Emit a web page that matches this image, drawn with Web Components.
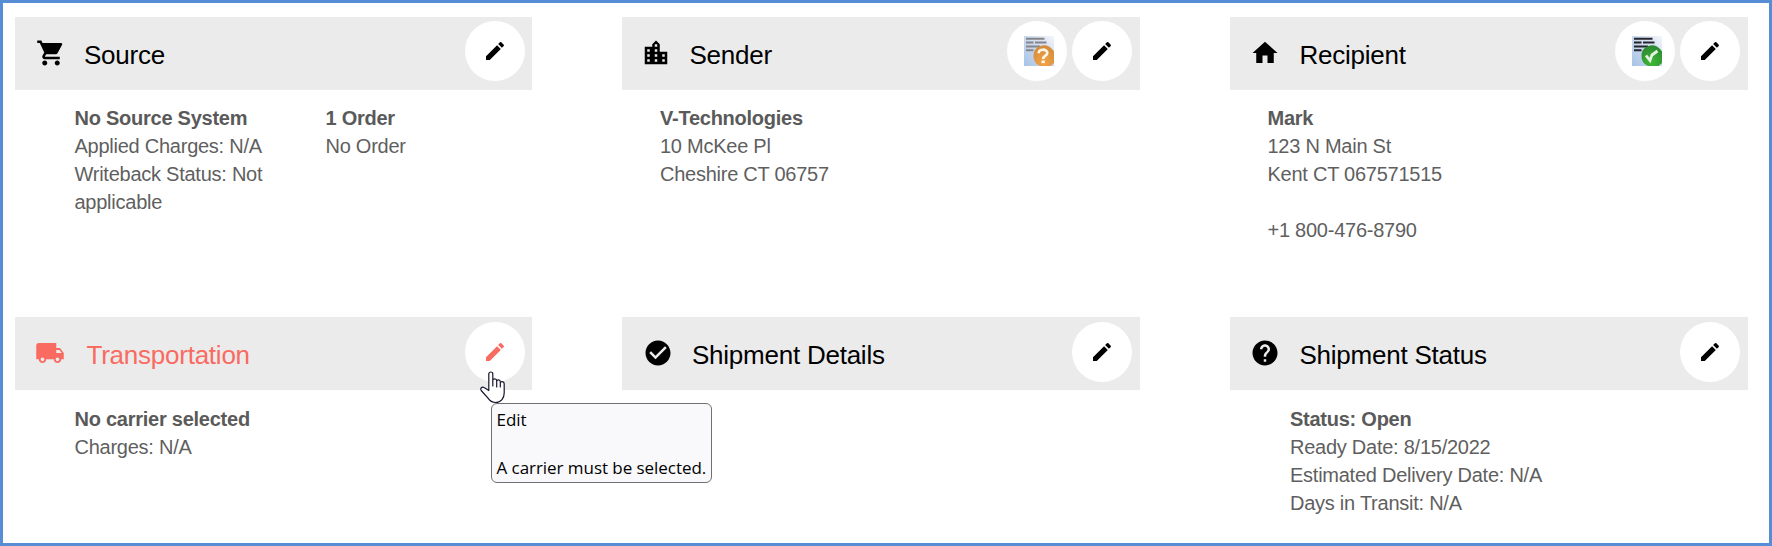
<!DOCTYPE html>
<html lang="en">
<head>
<meta charset="utf-8">
<title>Shipment</title>
<style>
html,body{margin:0;height:100%}
body{font-family:"Liberation Sans",Arial,sans-serif;background:#fff;overflow:hidden}
</style>
</head>
<body>
<shipment-board>
  <info-card icon="cart" heading="Source" style="--title-gap:18px;--body-pad:59.5px">
    <round-button slot="actions" icon="edit"></round-button>
    <text-lines style="width:251px"><b>No Source System</b><span>Applied Charges: N/A</span><span>Writeback Status: Not</span><span>applicable</span></text-lines>
    <text-lines><b>1 Order</b><span>No Order</span></text-lines>
  </info-card>
  <info-card icon="city" heading="Sender" style="--body-pad:38px;--icon-pad:19px;--title-gap:18.5px;--end:8px">
    <round-button slot="actions" icon="unverified"></round-button>
    <round-button slot="actions" icon="edit"></round-button>
    <text-lines><b>V-Technologies</b><span>10 McKee Pl</span><span>Cheshire CT 06757</span></text-lines>
  </info-card>
  <info-card icon="home" heading="Recipient" style="--body-pad:37.5px;--icon-pad:20px;--title-gap:19.5px;--end:8px">
    <round-button slot="actions" icon="verified"></round-button>
    <round-button slot="actions" icon="edit"></round-button>
    <text-lines><b>Mark</b><span>123 N Main St</span><span>Kent CT 067571515</span><span>&nbsp;</span><span>+1 800-476-8790</span></text-lines>
  </info-card>
  <info-card icon="truck" heading="Transportation" class="second" style="--accent:#f96a60;--icon-pad:20px;--title-gap:21.5px;--body-pad:59.5px">
    <round-button slot="actions" icon="edit"></round-button>
    <text-lines><b>No carrier selected</b><span>Charges: N/A</span></text-lines>
  </info-card>
  <info-card icon="check" heading="Shipment Details" class="second" style="--title-gap:19.5px;--icon-pad:20.5px;--end:8px">
    <round-button slot="actions" icon="edit"></round-button>
  </info-card>
  <info-card icon="help" heading="Shipment Status" class="second" style="--title-gap:19.5px;--icon-pad:20px;--end:8px">
    <round-button slot="actions" icon="edit"></round-button>
    <text-lines><b>Status: Open</b><span>Ready Date: 8/15/2022</span><span>Estimated Delivery Date: N/A</span><span>Days in Transit: N/A</span></text-lines>
  </info-card>
  <hover-tip slot="overlay"><span>Edit</span><span>&nbsp;</span><span>A carrier must be selected.</span></hover-tip>
  <hand-cursor slot="overlay"></hand-cursor>
</shipment-board>
<script>
const PATHS = {
  cart:'<path d="M7 18c-1.1 0-1.99.9-1.99 2S5.900 22 7 22s2-.9 2-2-.9-2-2-2zM1 2v2h2l3.600 7.590-1.350 2.450c-.16.28-.25.61-.25.96 0 1.100.9 2 2 2h12v-2H7.420c-.14 0-.25-.11-.25-.25l.03-.12.9-1.630h7.450c.75 0 1.410-.41 1.750-1.030l3.580-6.490A1 1 0 0 0 20 4H5.210l-.94-2H1zm16 16c-1.100 0-1.990.9-1.990 2s.89 2 1.990 2 2-.9 2-2-.9-2-2-2z"/>',
  city:'<path d="M15 11V5l-3-3-3 3v2H3v14h18V11h-6zm-8 8H5v-2h2v2zm0-4H5v-2h2v2zm0-4H5V9h2v2zm6 8h-2v-2h2v2zm0-4h-2v-2h2v2zm0-4h-2V9h2v2zm0-4h-2V5h2v2zm6 12h-2v-2h2v2zm0-4h-2v-2h2v2z"/>',
  home:'<path d="M10 20v-6h4v6h5v-8h3L12 3 2 12h3v8z"/>',
  truck:'<path d="M20 8h-3V4H3c-1.100 0-2 .9-2 2v11h2c0 1.660 1.340 3 3 3s3-1.340 3-3h6c0 1.660 1.340 3 3 3s3-1.340 3-3h2v-5l-3-4zM6 18.500c-.83 0-1.500-.67-1.500-1.500s.67-1.500 1.500-1.500 1.500.67 1.500 1.500-.67 1.500-1.500 1.500zm13.500-9l1.960 2.500H17V9.500h2.500zm-1.500 9c-.83 0-1.500-.67-1.500-1.500s.67-1.500 1.500-1.500 1.500.67 1.500 1.500-.67 1.500-1.500 1.500z"/>',
  check:'<path d="M12 2C6.480 2 2 6.480 2 12s4.480 10 10 10 10-4.480 10-10S17.520 2 12 2zm-2 15l-5-5 1.410-1.410L10 14.170l7.590-7.590L19 8l-9 9z"/>',
  help:'<path d="M12 2C6.480 2 2 6.480 2 12s4.480 10 10 10 10-4.480 10-10S17.520 2 12 2zm1 17h-2v-2h2v2zm2.070-7.750l-.9.92C13.450 12.900 13 13.500 13 15h-2v-.5c0-1.100.45-2.100 1.170-2.830l1.240-1.260c.37-.36.59-.86.59-1.410 0-1.100-.9-2-2-2s-2 .9-2 2H8c0-2.210 1.790-4 4-4s4 1.790 4 4c0 .88-.36 1.680-.93 2.250z"/>',
  edit:'<path d="M3 17.250V21h3.750L17.810 9.940l-3.750-3.750L3 17.250zM20.710 7.040a1 1 0 0 0 0-1.410l-2.340-2.340a1 1 0 0 0-1.410 0l-1.830 1.830 3.750 3.750 1.830-1.830z"/>'
};
const record = (ink, light, dark, mark) => `<svg width="30" height="30" viewBox="0 0 30 30" style="margin-left:4px">
  <defs><linearGradient id="p" x1="1" y1="0" x2="0" y2="1"><stop offset="0" stop-color="#f2f5fb"/><stop offset=".5" stop-color="#ccd8ed"/><stop offset="1" stop-color="#a6c3e6"/></linearGradient>
  <radialGradient id="b" cx=".5" cy=".85" r=".8"><stop offset="0" stop-color="${light}"/><stop offset="1" stop-color="${dark}"/></radialGradient></defs>
  <path fill="url(#p)" d="M0 0h30v30H0z"/>
  <path stroke="${ink}" stroke-width="2" d="M2 2.700h18.500M2 6.500h7.500M11 6.500h11.500M2 10.400h14M2 14.200h7.500"/>
  <path fill="url(#b)" d="M9.500 20a10.500 10.500 0 0 1 18.500-7l2 2.500V27l-3.500 3H16a10.500 10.500 0 0 1-6.500-10z"/>${mark}</svg>`;
const PICTURES = {
  unverified: record('#85868a','#f0a548','#d58a3a','<path fill="none" stroke="#fff6e6" stroke-width="2.700" d="M14.700 17.300c0-4.800 8.600-4.600 8.600-.4 0 3-4.200 3-4.200 6"/><path fill="#fff6e6" d="M17.500 24.500h3.300v2.600h-3.300z"/>'),
  verified: record('#24262e','#3fb836','#2c8a30','<path fill="none" stroke="#e4f3df" stroke-width="2.800" d="M14 19.500l4 5 2-5.500 5.500-4"/>')
};
const svg = (name, size) => PICTURES[name] || `<svg width="${size}" height="${size}" viewBox="0 0 24 24" fill="currentColor">${PATHS[name]}</svg>`;

function define(tag, render){
  customElements.define(tag, class extends HTMLElement{
    constructor(){ super(); this.attachShadow({mode:'open'}); }
    connectedCallback(){ this.shadowRoot.innerHTML = render(this); }
  });
}
define('shipment-board', () => `<style>
  :host{box-sizing:border-box;display:grid;position:relative;height:546px;border:3px solid #568dd4;padding:14px 21px 0 12px;
    grid-template-columns:517px 518px 518px;grid-template-rows:300px 1fr;column-gap:90px;background:#fff}
  </style><slot></slot><slot name="overlay"></slot>`);
define('info-card', el => `<style>
  :host{display:block;color:var(--accent,#000)}
  :host(.second){--top:5px;--body-top:15px}
  header{box-sizing:border-box;height:73px;background:#ebebeb;display:flex;align-items:flex-start;padding-right:var(--end,7px)}
  .icon{display:flex;padding:20.500px 0 0 var(--icon-pad,21px)}
  h2{flex:1;margin:0 0 0 var(--title-gap);padding-top:21px;font-size:26px;font-weight:400;line-height:34px;letter-spacing:-.24px;white-space:nowrap}
  .actions{display:flex;gap:5px;padding-top:var(--top,4px)}
  .body{display:flex;padding:var(--body-top,14px) 0 0 var(--body-pad,60px)}
  </style><header><div class="icon">${svg(el.getAttribute('icon'),30)}</div><h2>${el.getAttribute('heading')}</h2>
  <div class="actions"><slot name="actions"></slot></div></header><div class="body"><slot></slot></div>`);
define('round-button', el => `<style>
  :host{display:flex;width:60px;height:60px;border-radius:50%;background:#fff;align-items:center;justify-content:center}
  </style>${svg(el.getAttribute('icon'),24)}`);
define('text-lines', () => `<style>
  :host{display:flex;flex-direction:column;font-size:20px;line-height:28px;letter-spacing:-.25px;color:#5f5f5f;white-space:nowrap}
  ::slotted(b){color:#5a5a5a}
  </style><slot></slot>`);
define('hover-tip', () => `<style>
  :host{position:absolute;left:488px;top:400px;width:221px;height:80px;box-sizing:border-box;border:1px solid #707074;border-radius:6px;
    background:#f9f9fb;padding:4px 4.500px;display:flex;flex-direction:column;font:17px/24px "Open Sans","Noto Sans",sans-serif;color:#000;letter-spacing:-.05px;white-space:nowrap}
  </style><slot></slot>`);
define('hand-cursor', () => `<style>
  :host{position:absolute;left:476px;top:367px;display:block}svg{display:block}
  </style><svg width="28" height="34" viewBox="0 0 28 34"><path fill="#fff" stroke="#14142a" stroke-width="1.200" stroke-linejoin="round" stroke-linecap="round"
   d="M9.800 20.500V4a2 2 0 0 1 4 0v12V10.500c0-2.200 3.900-2.200 3.900.3V17v-5.500c0-2.300 3.600-2.200 3.600.3V17v-4c0-2 3.900-2 3.900.8V23c0 5-3 9.500-8.700 9.500-3.300 0-5.700-1.600-7.500-4.300L2.200 20.500c-1.500-2.200.8-4.300 2.900-2.900z"/></svg>`);
</script>
</body>
</html>
